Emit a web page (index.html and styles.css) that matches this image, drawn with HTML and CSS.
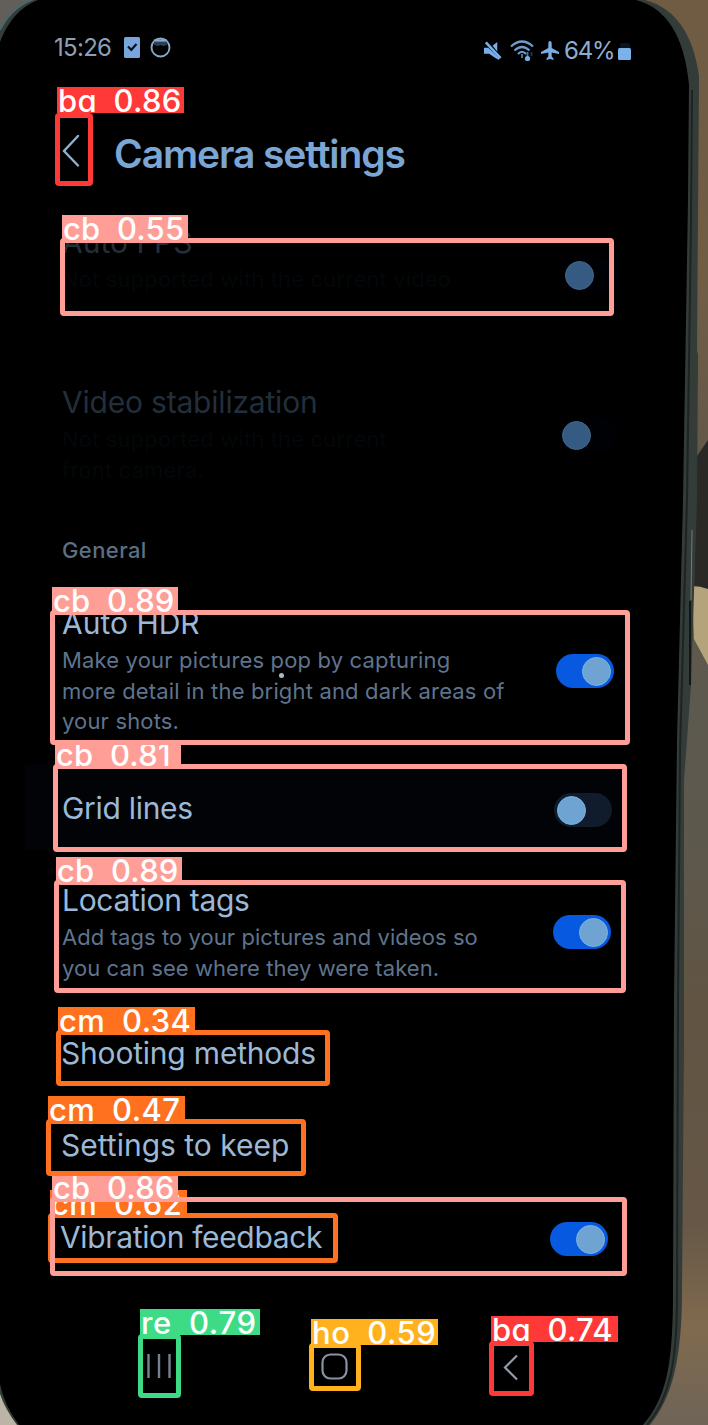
FILE: index.html
```html
<!DOCTYPE html>
<html lang="en">
<head>
<meta charset="utf-8">
<title>Camera settings</title>
<link rel="stylesheet" href="styles.css">
</head>
<body>
<div class="stage">
  <svg class="scene" viewBox="0 0 708 1425" aria-hidden="true">
    <defs>
      <linearGradient id="wall" x1="0" y1="0" x2="0" y2="1">
        <stop offset="0" stop-color="#705b43"/><stop offset=".2" stop-color="#705d46"/><stop offset=".32" stop-color="#64584a"/>
        <stop offset=".5" stop-color="#5c594f"/><stop offset=".62" stop-color="#5e584b"/><stop offset=".7" stop-color="#615443"/>
        <stop offset=".86" stop-color="#665747"/><stop offset=".93" stop-color="#806a4e"/><stop offset="1" stop-color="#6f6457"/>
      </linearGradient>
    </defs>
    <rect width="708" height="1425" fill="url(#wall)"/>
    <path d="M0 0H40V50H0Z" fill="#625f5b"/>
    <path d="M0 1370H40V1425H0Z" fill="#bcb5a5"/>
    <path d="M697 456L708 440V590L694 587Z" fill="#2b2926"/>
    <path d="M692 586Q700 586 708 589V665L694 639Z" fill="#b5a47b"/>
    <path d="M0 30Q12 8 34 0H645Q690 12 699 76L697 350L698 355L697 500L691 685L684 780L684 1040L682 1290C682 1360 672 1398 650 1425H17Q5 1409 0 1394Z" fill="#333c39"/>
    <path d="M0 30Q10 9 30 0" fill="none" stroke="#46696e" stroke-width="2"/>
    <path d="M0 42Q12 10 38 0H636Q682 12 689 85L688 200L683 500L677 740L674 1000L673 1290C673 1360 668 1396 643 1425H19Q4 1405 0 1384Z" fill="#000"/>
    <path d="M692 90L691 220L687 500L680 750L678 1000L677 1295C677 1362 670 1398 647 1425" fill="none" stroke="#1d2422" stroke-width="2"/>
    <path d="M692 530L691 600" fill="none" stroke="#777c74"/>
    <path d="M690 601V685" fill="none" stroke="#121716" stroke-width="2"/>
    <path d="M25 764H625V850H25Z" fill="#010306"/>
  </svg>

  <main class="screen">
    <div class="status">
      <div class="status-left">
        <span class="clock">15:26</span>
        <svg class="i-check" viewBox="0 0 16 21"><rect width="16" height="21" rx="1.500" fill="#78a6dc"/><path d="M4 9.500l3.300 3.300L12.500 7" fill="none" stroke="#07101b" stroke-width="2.200"/></svg>
        <svg class="i-face" viewBox="0 0 21 21"><circle cx="10.500" cy="10.500" r="9" fill="none" stroke="#8ca8c7" stroke-width="1.900"/><path d="M4 4H17V7.500Q14 10 10.500 8Q7 10 4 7.500Z" fill="#2b4058"/><path d="M4 3.500H17" stroke="#8ca8c7" stroke-width="2.200"/></svg>
      </div>
      <div class="status-right">
        <svg class="i-mute" viewBox="0 0 20 20"><path d="M1 7H5.500L17 17.500V20L13 18L6.500 13.500H1Z" fill="#79aee4"/><path d="M10 5L15 1V11Z" fill="#79aee4"/><path d="M3 1.500L18.500 18" stroke="#79aee4" stroke-width="2.800"/></svg>
        <svg class="i-wifi" viewBox="0 0 24 22"><g fill="none" stroke="#6f9ccc" stroke-width="2.200"><path d="M1 6.500Q12-3.500 23 6.500"/><path d="M4.500 10.500Q12 3.500 19.500 10.500"/><path d="M8 14Q12 9.500 16 14"/></g><path d="M12 14v4M17.500 12v6" stroke="#5178a3" stroke-width="1.800"/><path d="M21.500 12v4" stroke="#22364c" stroke-width="1.800"/><circle cx="17.500" cy="18.500" r="2.600" fill="#79aee4"/></svg>
        <svg class="i-plane" viewBox="0 0 18 19"><path d="M9 0Q10.700 0 10.700 3V7L18 11V13L10.700 11.500V15.500L12.500 17.500V19L9 18L5.500 19V17.500L7.300 15.500V11.500L0 13V11L7.300 7V3Q7.300 0 9 0Z" fill="#79aee4"/></svg>
        <span class="charge">64%</span>
        <svg class="i-batt" viewBox="0 0 14 18"><path d="M2 6V3Q2 1 4 1H10Q12 1 12 3V6Z" fill="#0c151f"/><rect y="6" width="13" height="12" rx="1.500" fill="#7bb2ea"/></svg>
      </div>
    </div>

    <header class="header">
      <svg class="i-back" viewBox="0 0 18 34"><path d="M16 2L2 17L16 31.500" fill="none" stroke="#91b0d0" stroke-width="2.400" stroke-linecap="round"/></svg>
      <h1 class="heading">Camera settings</h1>
    </header>

    <section class="row row-fps disabled">
      <div class="copy"><h2 class="title t-fps">Auto FPS</h2><p class="desc ghost">Not supported with the current video</p></div>
      <span class="switch faded"></span>
    </section>
    <section class="row row-video disabled">
      <div class="copy"><h2 class="title t-video">Video stabilization</h2><p class="desc ghost">Not supported with the current<br>front camera.</p></div>
      <span class="switch faded"></span>
    </section>
    <div class="group">General</div>
    <section class="row row-hdr">
      <div class="copy"><h2 class="title">Auto HDR</h2><p class="desc">Make your pictures pop by capturing<br>more detail in the bright and dark areas of<br>your shots.</p></div>
      <span class="switch on"></span>
    </section>
    <section class="row row-grid">
      <div class="copy"><h2 class="title t-grid">Grid lines</h2></div>
      <span class="switch"></span>
    </section>
    <section class="row row-loc">
      <div class="copy"><h2 class="title t-loc">Location tags</h2><p class="desc d-loc">Add tags to your pictures and videos so<br>you can see where they were taken.</p></div>
      <span class="switch on"></span>
    </section>
    <section class="row row-shoot"><h2 class="title t-shoot">Shooting methods</h2></section>
    <section class="row row-keep"><h2 class="title">Settings to keep</h2></section>
    <section class="row row-vib">
      <div class="copy"><h2 class="title t-vib">Vibration feedback</h2></div>
      <span class="switch on"></span>
    </section>

    <nav class="nav">
      <svg class="n-recents" viewBox="0 0 26 26"><path d="M2.500 1V25M13 1V25M23.500 1V25" stroke="#76808f" stroke-width="2.400"/></svg>
      <svg class="n-home" viewBox="0 0 27 27"><rect x="1.500" y="1.500" width="24" height="24" rx="8" fill="none" stroke="#8793a5" stroke-width="2.200"/></svg>
      <svg class="n-back" viewBox="0 0 16 27"><path d="M14 1.500L2 13.500L14 25.500" fill="none" stroke="#929dac" stroke-width="2.200"/></svg>
    </nav>
  </main>

  <div class="box cm b-vib-text"><span class="tag">cm 0.62</span></div>
  <div class="box cb b-vib"><span class="tag">cb 0.86</span></div>
  <div class="box cm b-keep"><span class="tag">cm 0.47</span></div>
  <div class="box cm b-shoot"><span class="tag">cm 0.34</span></div>
  <div class="box cb b-fps"><span class="tag">cb 0.55</span></div>
  <div class="box ho b-home"><span class="tag">ho 0.59</span></div>
  <div class="box ba b-navback"><span class="tag">ba 0.74</span></div>
  <div class="box re b-recents"><span class="tag">re 0.79</span></div>
  <div class="box cb b-grid"><span class="tag">cb 0.81</span></div>
  <div class="box ba b-back"><span class="tag">ba 0.86</span></div>
  <div class="box cb b-loc"><span class="tag">cb 0.89</span></div>
  <div class="box cb b-hdr"><span class="tag">cb 0.89</span></div>
  <i class="speck"></i>
</div>
</body>
</html>
```
FILE: styles.css
```css
* { box-sizing: border-box; }
body { margin: 0; background: #000; font-family: Inter, "Liberation Sans", sans-serif; }
h1, h2, p { margin: 0; font-weight: 400; }
svg { display: block; flex: none; }

.stage { position: relative; width: 708px; height: 1425px; overflow: hidden; }
.scene { position: absolute; inset: 0; width: 708px; height: 1425px; }
.screen { position: relative; width: 672px; height: 1425px; display: flex; flex-direction: column; color: #9dbbdc; }

.status { height: 100px; padding: 34px 40px 0 54px; display: flex; justify-content: space-between; align-items: flex-start; }
.status-left, .status-right { display: flex; align-items: center; height: 27px; }
.status-right { margin-top: 3px; }
.clock { width: 70px; font-size: 24px; line-height: 27px; letter-spacing: -.7px; color: #8e9fb3; }
.charge { width: 53px; margin-left: 5px; font-size: 24px; line-height: 27px; letter-spacing: -1.2px; color: #8eaed1; }
.i-check { width: 16px; height: 21px; }
.i-face { width: 21px; height: 21px; margin-left: 10px; }
.i-mute { width: 19px; height: 19px; }
.i-wifi { width: 24px; height: 22px; margin-left: 8px; }
.i-plane { width: 18px; height: 19px; margin-left: 7px; }
.i-batt { width: 14px; height: 18px; margin-left: 1px; }

.header { height: 110px; padding: 33px 0 0 62px; display: flex; align-items: flex-start; }
.i-back { width: 18px; height: 34px; margin-top: 1px; }
.heading { margin-left: 34px; font-size: 39px; line-height: 42px; font-weight: 600; letter-spacing: -1.1px; color: #7ba5d2; white-space: nowrap; }

.row { display: flex; align-items: flex-start; justify-content: space-between; padding-left: 62px; flex: none; }
.title { font-size: 30px; line-height: 38px; margin-bottom: -2px; white-space: nowrap; color: #9bb9d6; }
.desc { margin-top: 5px; font-size: 22px; line-height: 30.500px; letter-spacing: .16px; white-space: nowrap; color: #5f748c; }
.disabled .title { color: #222f3b; }
.desc.ghost { color: #030709; }
.group { height: 70px; padding: 15px 0 0 62px; font-size: 22px; line-height: 30px; font-weight: 500; letter-spacing: .4px; color: #5c7084; flex: none; }
.t-video { letter-spacing: -.2px; }
.t-grid { letter-spacing: -.3px; }
.t-loc { letter-spacing: -.3px; }
.d-loc { letter-spacing: .07px; }
.t-shoot { letter-spacing: -.2px; }
.t-vib { letter-spacing: -.35px; }

.row-fps { height: 140px; padding-top: 13px; padding-right: 52px; }
.row-fps .switch { margin-top: 35px; }
.row-video { height: 170px; padding-top: 33px; padding-right: 55px; }
.row-video .switch { margin-top: 35px; }
.row-hdr { height: 175px; padding-top: 14px; padding-right: 58px; }
.row-hdr .switch { margin-top: 50px; }
.row-grid { height: 87px; padding-top: 24px; padding-right: 60px; }
.row-grid .switch { margin-top: 4px; }
.row-loc { height: 148px; padding-top: 29px; padding-right: 61px; }
.row-loc .switch { margin-top: 34px; }
.row-shoot { height: 90px; padding: 34px 0 0 61px; }
.row-keep { height: 90px; padding: 36px 0 0 61px; }
.row-vib { height: 110px; padding: 38px 64px 0 60px; }
.row-vib .switch { margin-top: 4px; }

.switch { width: 58px; height: 34px; padding: 3px; border-radius: 17px; background: #101c2c; display: flex; flex: none; }
.switch::before { content: ""; width: 27px; height: 27px; border-radius: 50%; background: #6fa3d2; border: 1px solid #7bb3e4; }
.switch.on { background: #0759df; justify-content: flex-end; }
.switch.faded { background: #000104; }
.switch.faded::before { background: #355b82; border-color: #42678c; }

.nav { height: 135px; padding: 63px 0 0 146px; display: flex; align-items: flex-start; }
.n-recents { width: 26px; height: 26px; }
.n-home { width: 27px; height: 27px; margin-left: 149px; }
.n-back { width: 16px; height: 27px; margin-left: 155px; margin-top: 1px; }

/* Detection overlays: frames and tags placed over the phone screen */
.box { position: absolute; border: 5px solid var(--c); border-radius: 4px; }
.tag { position: absolute; left: -3px; top: -28px; width: 126px; height: 26px; padding-left: 1px; background: var(--c); color: #fff; font-size: 31px; line-height: 28px; font-weight: 500; word-spacing: 8px; letter-spacing: .2px; white-space: nowrap; font-feature-settings: "cv11"; }
.cb { --c: #ff9d97; }
.cm { --c: #ff701f; }
.ba { --c: #ff3838; }
.re { --c: #3ddb86; }
.ho { --c: #ffb21d; }
.cm .tag { width: 137px; letter-spacing: .45px; }
.re .tag { width: 120px; letter-spacing: .7px; }
.ho .tag, .ba .tag { width: 127px; letter-spacing: .3px; }
.ho .tag { letter-spacing: .55px; }

.b-back { left: 55px; top: 113px; width: 38px; height: 73px; }
.b-back .tag { top: -31px; }
.b-fps { left: 60px; top: 238px; width: 554px; height: 78px; }
.b-hdr { left: 50px; top: 610px; width: 580px; height: 135px; }
.b-grid { left: 53px; top: 764px; width: 574px; height: 88px; }
.b-loc { left: 54px; top: 880px; width: 572px; height: 113px; }
.b-shoot { left: 56px; top: 1030px; width: 274px; height: 56px; }
.b-keep { left: 46px; top: 1119px; width: 260px; height: 57px; }
.b-vib-text { left: 48px; top: 1213px; width: 290px; height: 50px; }
.b-vib { left: 50px; top: 1197px; width: 577px; height: 79px; }
.b-recents { left: 138px; top: 1334px; width: 43px; height: 64px; }
.b-recents .tag { top: -30px; }
.b-home { left: 309px; top: 1343px; width: 52px; height: 48px; }
.b-home .tag { top: -29px; }
.b-navback { left: 489px; top: 1341px; width: 45px; height: 55px; }
.b-navback .tag { top: -30px; }
.speck { position: absolute; left: 279px; top: 673px; width: 5px; height: 5px; border-radius: 50%; background: #a3bcd0; }
```
